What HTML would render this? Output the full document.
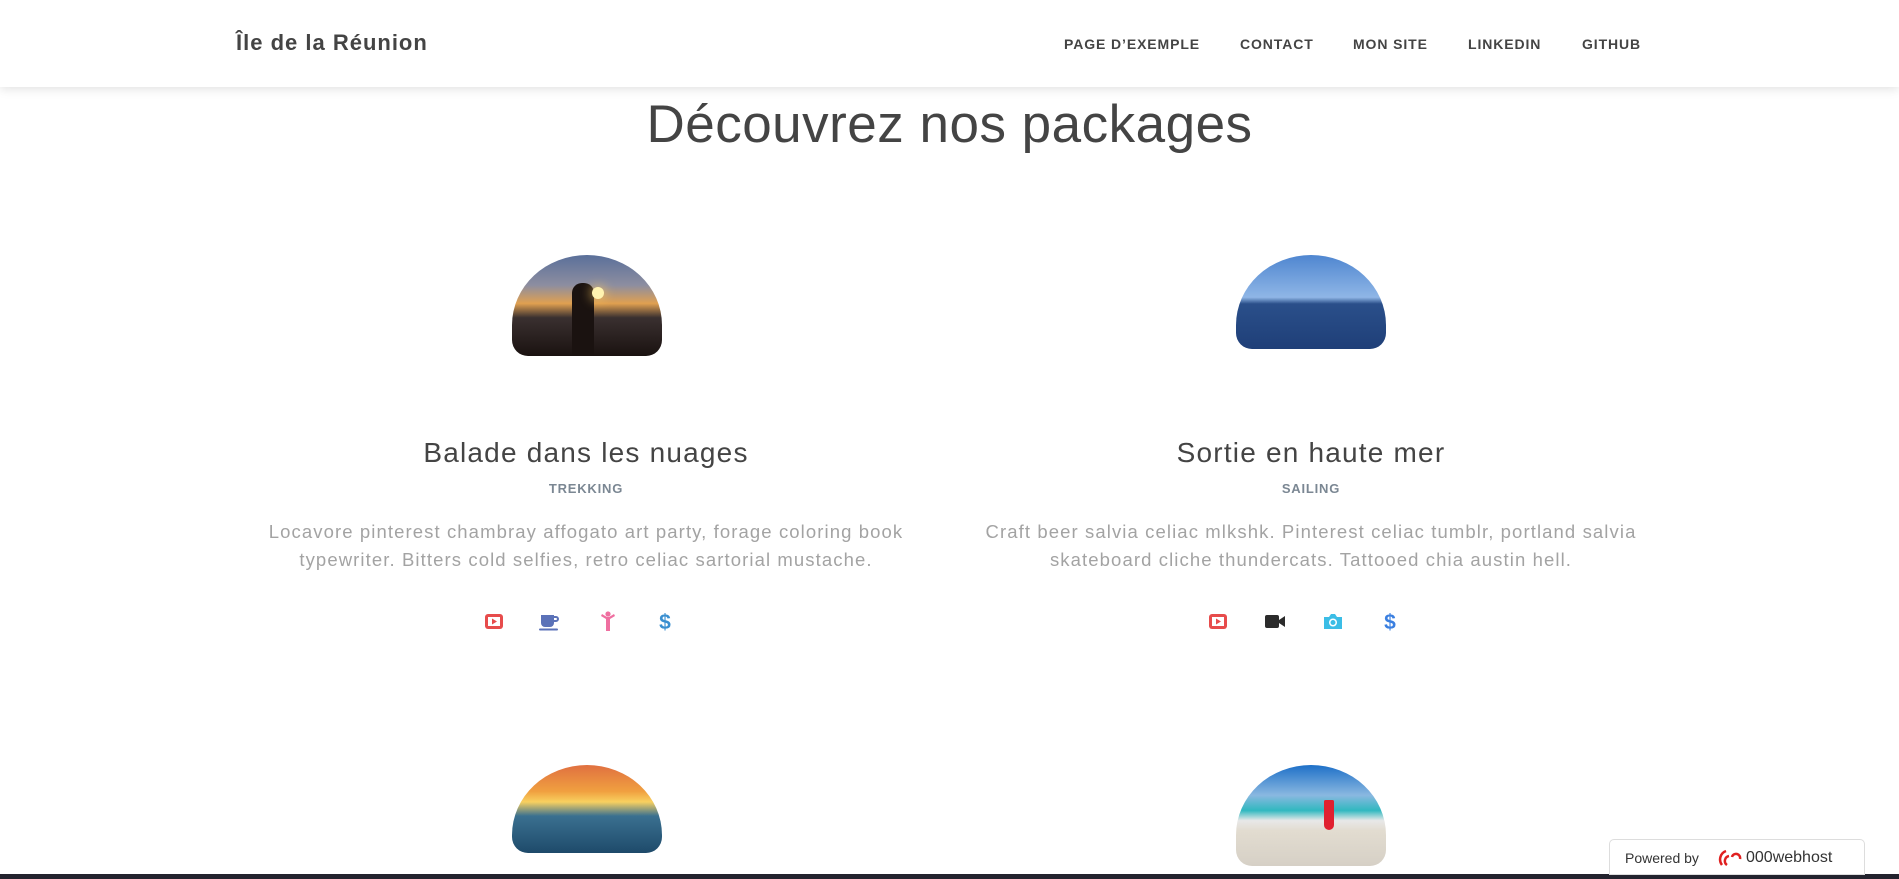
<!DOCTYPE html>
<html><head><meta charset="utf-8"><style>
*{margin:0;padding:0;box-sizing:border-box}
body{width:1899px;height:879px;overflow:hidden;background:#fff;font-family:"Liberation Sans",sans-serif;position:relative}
.nav{position:absolute;left:0;top:0;width:1899px;height:87px;background:#fff;box-shadow:0 2px 10px rgba(0,0,0,.12);z-index:2}
.brand{position:absolute;left:236px;top:30px;font-size:22px;font-weight:bold;color:#444;letter-spacing:1px}
.nav a{position:absolute;top:36px;font-size:14px;font-weight:bold;color:#444;text-decoration:none;letter-spacing:.9px}
h1{position:absolute;top:94px;left:0;width:1899px;text-align:center;font-weight:normal;font-size:53px;color:#444;letter-spacing:.5px}
.img{position:absolute;width:150px;border-radius:75px 75px 16px 16px/70px 70px 16px 16px;overflow:hidden}
.t{position:absolute;width:760px;text-align:center;font-weight:normal;color:#444;font-size:28px;letter-spacing:1.2px}
.s{position:absolute;width:760px;text-align:center;font-weight:bold;color:#7b8793;font-size:13px;letter-spacing:.8px}
.p{position:absolute;width:760px;text-align:center;color:#a3a3a3;font-size:18.5px;line-height:28px;letter-spacing:1.1px}
.ic{position:absolute;top:610px;width:22px;height:22px}
</style></head><body>
<div class="nav">
<div class="brand">Île de la Réunion</div>
<a style="left:1064px">PAGE D’EXEMPLE</a>
<a style="left:1240px">CONTACT</a>
<a style="left:1353px">MON SITE</a>
<a style="left:1468px">LINKEDIN</a>
<a style="left:1582px">GITHUB</a>
</div>
<h1>Découvrez nos packages</h1>

<div class="img" style="left:512px;top:255px;height:101px;background:linear-gradient(#5a6f9a 0%,#8d8ea0 30%,#e0a050 48%,#3a3030 62%,#1a1210 100%)">
<div style="position:absolute;left:60px;top:28px;width:22px;height:75px;background:#1a1210;border-radius:10px 10px 0 0"></div>
<div style="position:absolute;left:80px;top:32px;width:12px;height:12px;border-radius:50%;background:#fff3b0;box-shadow:0 0 12px #ffcc60"></div>
</div>
<div class="img" style="left:1236px;top:255px;height:94px;background:linear-gradient(#4f86d0 0%,#8fb6e6 45%,#2a4f8a 52%,#1f3f78 100%)"></div>
<div class="img" style="left:512px;top:765px;height:88px;background:linear-gradient(#e07040 0%,#f0a040 30%,#f8d060 42%,#3a7090 58%,#1e4a6a 100%)"></div>
<div class="img" style="left:1236px;top:765px;height:101px;background:linear-gradient(#1e70c8 0%,#8ab8e0 30%,#30b8c0 45%,#e8e8e8 55%,#e2dcd0 65%,#d6d0c6 100%)">
<div style="position:absolute;left:88px;top:35px;width:10px;height:30px;background:#e02030;border-radius:2px 2px 6px 6px"></div>
</div>

<div class="t" style="left:206px;top:437px">Balade dans les nuages</div>
<div class="s" style="left:206px;top:481px">TREKKING</div>
<div class="p" style="left:206px;top:518px">Locavore pinterest chambray affogato art party, forage coloring book<br>typewriter. Bitters cold selfies, retro celiac sartorial mustache.</div>
<div class="t" style="left:931px;top:437px">Sortie en haute mer</div>
<div class="s" style="left:931px;top:481px">SAILING</div>
<div class="p" style="left:931px;top:518px">Craft beer salvia celiac mlkshk. Pinterest celiac tumblr, portland salvia<br>skateboard cliche thundercats. Tattooed chia austin hell.</div>

<svg class="ic" style="left:483px" viewBox="0 0 22 22"><rect x="2" y="4" width="18" height="15" rx="3" fill="#e74c4c"/><rect x="5" y="7" width="12" height="9" fill="#fff"/><path d="M9 8.5v6l5-3z" fill="#e74c4c"/></svg>
<svg class="ic" style="left:538px" viewBox="0 0 22 22"><path d="M3 5h13v8a4 4 0 0 1-4 4H7a4 4 0 0 1-4-4z" fill="#5b72b8"/><path d="M16 6h2a3 3 0 0 1 0 6h-2v-2h2a1 1 0 0 0 0-2h-2z" fill="#5b72b8"/><rect x="1" y="18.5" width="19" height="2" rx="1" fill="#5b72b8"/></svg>
<svg class="ic" style="left:597px" viewBox="0 0 22 22"><circle cx="11" cy="4" r="2.6" fill="#ef6fa0"/><path d="M4 6l5 3v12h4V9l5-3-1-2-5 3h-2L5 4z" fill="#ef6fa0"/></svg>
<svg class="ic" style="left:654px" viewBox="0 0 22 22"><text x="11" y="19" text-anchor="middle" font-size="21" font-weight="bold" font-family="Liberation Sans" fill="#3a8fd0">$</text></svg>

<svg class="ic" style="left:1207px" viewBox="0 0 22 22"><rect x="2" y="4" width="18" height="15" rx="3" fill="#e74c4c"/><rect x="5" y="7" width="12" height="9" fill="#fff"/><path d="M9 8.5v6l5-3z" fill="#e74c4c"/></svg>
<svg class="ic" style="left:1264px" viewBox="0 0 22 22"><rect x="1" y="5" width="14" height="13" rx="2" fill="#2b2b2b"/><path d="M15 10l6-4v11l-6-4z" fill="#2b2b2b"/></svg>
<svg class="ic" style="left:1322px" viewBox="0 0 22 22"><path d="M2 7h5l2-3h4l2 3h5v12H2z" fill="#3bbde6"/><circle cx="11" cy="12.5" r="4" fill="#fff"/><circle cx="11" cy="12.5" r="2.5" fill="#3bbde6"/></svg>
<svg class="ic" style="left:1379px" viewBox="0 0 22 22"><text x="11" y="19" text-anchor="middle" font-size="21" font-weight="bold" font-family="Liberation Sans" fill="#3a7fe0">$</text></svg>

<div style="position:absolute;left:0;top:874px;width:1899px;height:5px;background:#23232e"></div>
<div style="position:absolute;left:1609px;top:839px;width:256px;height:36px;background:#fff;border:1px solid #ddd;border-radius:5px 5px 0 0;font-size:14px;color:#333">
<span style="position:absolute;left:15px;top:10px">Powered by</span>
<svg style="position:absolute;left:108px;top:7px" width="24" height="22" viewBox="0 0 24 22"><path d="M4 18a9 9 0 0 1 4-14M9 18a5 5 0 0 1 2-9M14 10a4 4 0 0 1 8 2" stroke="#e02020" stroke-width="2.5" fill="none"/></svg>
<span style="position:absolute;left:136px;top:9px;font-size:16px">000webhost</span>
</div>
</body></html>
